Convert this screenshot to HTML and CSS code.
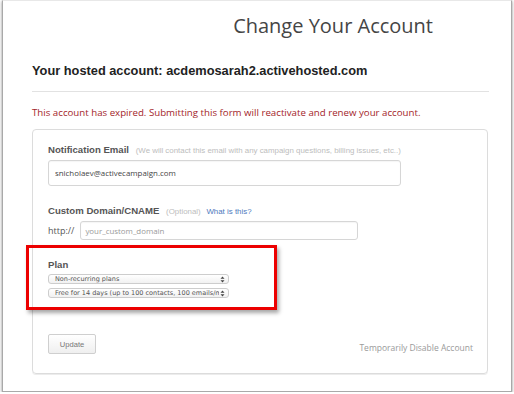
FILE: index.html
```html
<!DOCTYPE html>
<html lang="en">

<head>
    <meta charset="UTF-8">
    <meta name="viewport" content="width=device-width, initial-scale=1.0">
    <title>Change Your Account</title>
    <link rel="stylesheet" href="styles.css">
</head>

<body>
    <div class="page">
        <h1 class="page-title">Change Your Account</h1>
        <div class="account-head">
            <h2>Your hosted account: acdemosarah2.activehosted.com</h2>
        </div>
        <p class="expired-note">This account has expired. Submitting this form will reactivate and renew your account.</p>

        <form class="account-form">
            <div class="field">
                <div class="field-label">Notification Email <span class="hint">(We will contact this email with any campaign questions, billing issues, etc..)</span></div>
                <input class="text-input email-input" type="text" value="snicholaev@activecampaign.com">
            </div>

            <div class="field">
                <div class="field-label">Custom Domain/CNAME <span class="hint">(Optional)</span> <a class="help-link" href="#">What is this?</a></div>
                <div class="domain-row">
                    <span class="prefix">http://</span>
                    <input class="text-input domain-input" type="text" placeholder="your_custom_domain">
                </div>
            </div>

            <div class="field plan-field">
                <div class="field-label">Plan</div>
                <div class="fake-select">
                    <span class="select-text">Non-recurring plans</span>
                    <svg class="select-arrows" width="5" height="7" viewBox="0 0 5 7"><path d="M0.5 2.8 L2.5 0.6 L4.5 2.8 Z M0.5 4.2 L2.5 6.4 L4.5 4.2 Z" fill="#444"/></svg>
                </div>
                <div class="fake-select">
                    <span class="select-text">Free for 14 days (up to 100 contacts, 100 emails/mth</span>
                    <svg class="select-arrows" width="5" height="7" viewBox="0 0 5 7"><path d="M0.5 2.8 L2.5 0.6 L4.5 2.8 Z M0.5 4.2 L2.5 6.4 L4.5 4.2 Z" fill="#444"/></svg>
                </div>
                <div class="highlight-frame"></div>
            </div>

            <div class="form-footer">
                <button class="update-button" type="button">Update</button>
                <a class="disable-link" href="#">Temporarily Disable Account</a>
            </div>
        </form>
    </div>
</body>

</html>
```

FILE: styles.css
```css
body {
    margin: 0;
    background: #fff;
    font-family: 'Open Sans', sans-serif;
}

.page {
    margin: 0 2px;
    padding: 10px 22px 17px 29px;
    border: 1px solid #a9a9a9;
    border-top-color: #e8e8e8;
    box-shadow: 0 1px 3px rgba(0, 0, 0, 0.45);
    background: #fff;
}

.page-title {
    margin: 0;
    padding-right: 56px;
    text-align: right;
    font-size: 20px;
    font-weight: 400;
    line-height: 30px;
    color: #454545;
}

.account-head {
    margin-top: 22px;
    padding-bottom: 12px;
    border-bottom: 1px solid #e2e2e2;
}

.account-head h2 {
    margin: 0;
    font-family: 'Liberation Sans', Arial, sans-serif;
    font-size: 12.8px;
    font-weight: 700;
    line-height: 16px;
    color: #222;
}

.expired-note {
    margin: 14px 0 9px;
    font-size: 9.7px;
    line-height: 14px;
    color: #a3242a;
}

.account-form {
    margin-right: 1px;
    padding: 14px 14px 19px 15px;
    border: 1px solid #dcdcdc;
    border-radius: 4px;
    box-shadow: 0 1px 0 #ececec;
}

.field + .field {
    margin-top: 19px;
}

.field-label {
    font-family: 'Liberation Sans', Arial, sans-serif;
    font-size: 9.6px;
    font-weight: 700;
    line-height: 12px;
    color: #555;
}

.hint {
    margin-left: 4px;
    font-size: 7.9px;
    font-weight: 400;
    color: #bdbdbd;
}

.help-link {
    margin-left: 3px;
    font-size: 7.9px;
    font-weight: 400;
    color: #4d79bd;
    text-decoration: none;
}

.text-input {
    display: block;
    box-sizing: border-box;
    border: 1px solid #d6d6d6;
    border-radius: 3px;
    box-shadow: inset 0 1px 1px rgba(0, 0, 0, 0.04);
    font-family: 'Open Sans', sans-serif;
    color: #444;
    outline: none;
}

.text-input::placeholder {
    color: #9a9a9a;
}

.email-input {
    width: 353px;
    height: 26px;
    margin-top: 3px;
    padding: 0 6px;
    font-size: 7.9px;
}

.domain-row {
    display: flex;
    align-items: center;
    gap: 6px;
    margin-top: 3px;
}

.prefix {
    font-size: 9px;
    color: #555;
}

.domain-input {
    width: 278px;
    height: 19px;
    padding: 0 4px;
    font-size: 7.9px;
}

.plan-field {
    position: relative;
}

.fake-select {
    display: flex;
    align-items: center;
    box-sizing: border-box;
    width: 181px;
    height: 10px;
    margin-top: 3px;
    padding: 0 3px 0 6px;
    border: 1px solid #cdcdcd;
    border-radius: 3px;
    background: linear-gradient(#fff, #f1f1f1);
    font-family: 'DejaVu Sans', sans-serif;
    font-size: 6.5px;
    color: #555;
}

.fake-select + .fake-select {
    margin-top: 4px;
}

.select-text {
    flex: 1;
    overflow: hidden;
    white-space: nowrap;
    line-height: 9px;
}

.select-arrows {
    flex: none;
    margin-left: 1px;
}

.highlight-frame {
    position: absolute;
    left: -22px;
    top: -14px;
    width: 245px;
    height: 59px;
    border: 3px solid #ec0000;
    box-shadow: 2px 3px 4px rgba(0, 0, 0, 0.35);
    pointer-events: none;
}

.form-footer {
    display: flex;
    justify-content: space-between;
    align-items: flex-end;
    margin-top: 36px;
}

.update-button {
    width: 48px;
    height: 20px;
    padding: 0;
    border: 1px solid #cfcfcf;
    border-radius: 2px;
    background: linear-gradient(#fff, #efefef);
    font-family: 'Liberation Sans', Arial, sans-serif;
    font-size: 7.6px;
    color: #777;
}

.disable-link {
    font-size: 8.5px;
    line-height: 12px;
    color: #9a9a9a;
    text-decoration: none;
}
```
